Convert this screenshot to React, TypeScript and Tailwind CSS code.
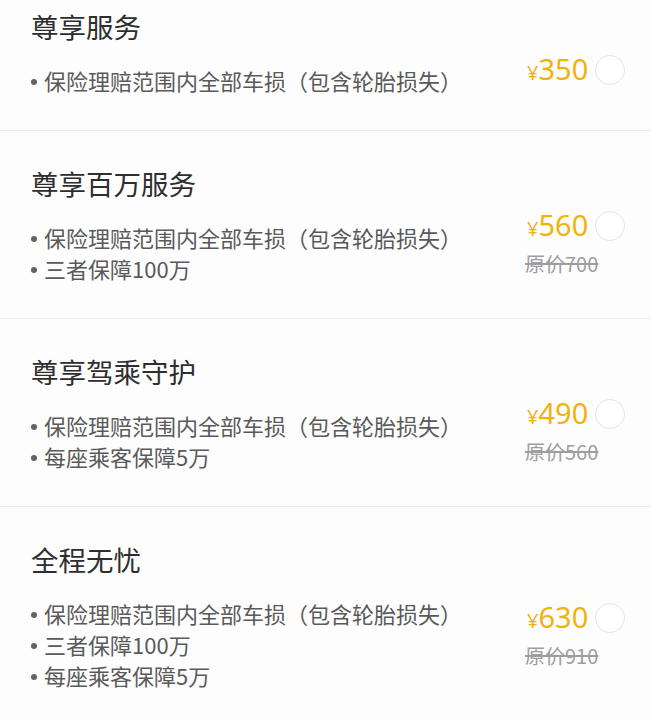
import React from 'react';

type Plan = {
  title: string;
  items: string[];
  price: number;
  original?: number;
};

const base = '保险理赔范围内全部车损（包含轮胎损失）';

const plans: Plan[] = [
  { title: '尊享服务', items: [base], price: 350 },
  { title: '尊享百万服务', items: [base, '三者保障100万'], price: 560, original: 700 },
  { title: '尊享驾乘守护', items: [base, '每座乘客保障5万'], price: 490, original: 560 },
  { title: '全程无忧', items: [base, '三者保障100万', '每座乘客保障5万'], price: 630, original: 910 },
];

function PlanRow({ plan, first }: { plan: Plan; first: boolean }) {
  return (
    <div className={`${first ? 'pt-[8px]' : 'pt-[34px] border-t border-[#ececec]'} pb-[34px] pl-[31px] pr-[26px]`}>
      <div className="h-[36px] leading-[36px] text-[27.5px] text-[#2e2e2e]">{plan.title}</div>
      <div className="mt-[21px] flex items-center">
        <div className="flex-1">
          {plan.items.map((item) => (
            <div key={item} className="flex items-center h-[31px] text-[22px] text-[#5a5a5a]">
              <span className="w-[6px] h-[6px] rounded-full bg-[#636363] mr-[7px] mt-[2px] shrink-0" />
              <span className="whitespace-nowrap">{item}</span>
            </div>
          ))}
        </div>
        <div className="-mt-[21px] w-[98px] flex flex-col">
          <div className="h-[34px] flex items-center">
            <div className="flex items-baseline text-[#f1b20c] font-['Noto_Sans',sans-serif]">
              <span className="text-[20px]">¥</span>
              <span className="text-[29px] leading-[34px]">{plan.price}</span>
            </div>
            <div className="ml-auto w-[30px] h-[30px] rounded-full border-[1.5px] border-[#e3e3e3] bg-white" />
          </div>
          {plan.original !== undefined && (
            <div className="mt-[9px] h-[24px] leading-[24px] -ml-[2px] text-[20px] text-[#9e9e9e] line-through">
              原价{plan.original}
            </div>
          )}
        </div>
      </div>
    </div>
  );
}

export default function App() {
  return (
    <div className="w-[651px] h-[719px] overflow-hidden bg-[#fdfdfd] font-['Noto_Sans_CJK_SC','Noto_Sans',sans-serif]">
      {plans.map((p, i) => (
        <PlanRow key={p.title} plan={p} first={i === 0} />
      ))}
    </div>
  );
}
